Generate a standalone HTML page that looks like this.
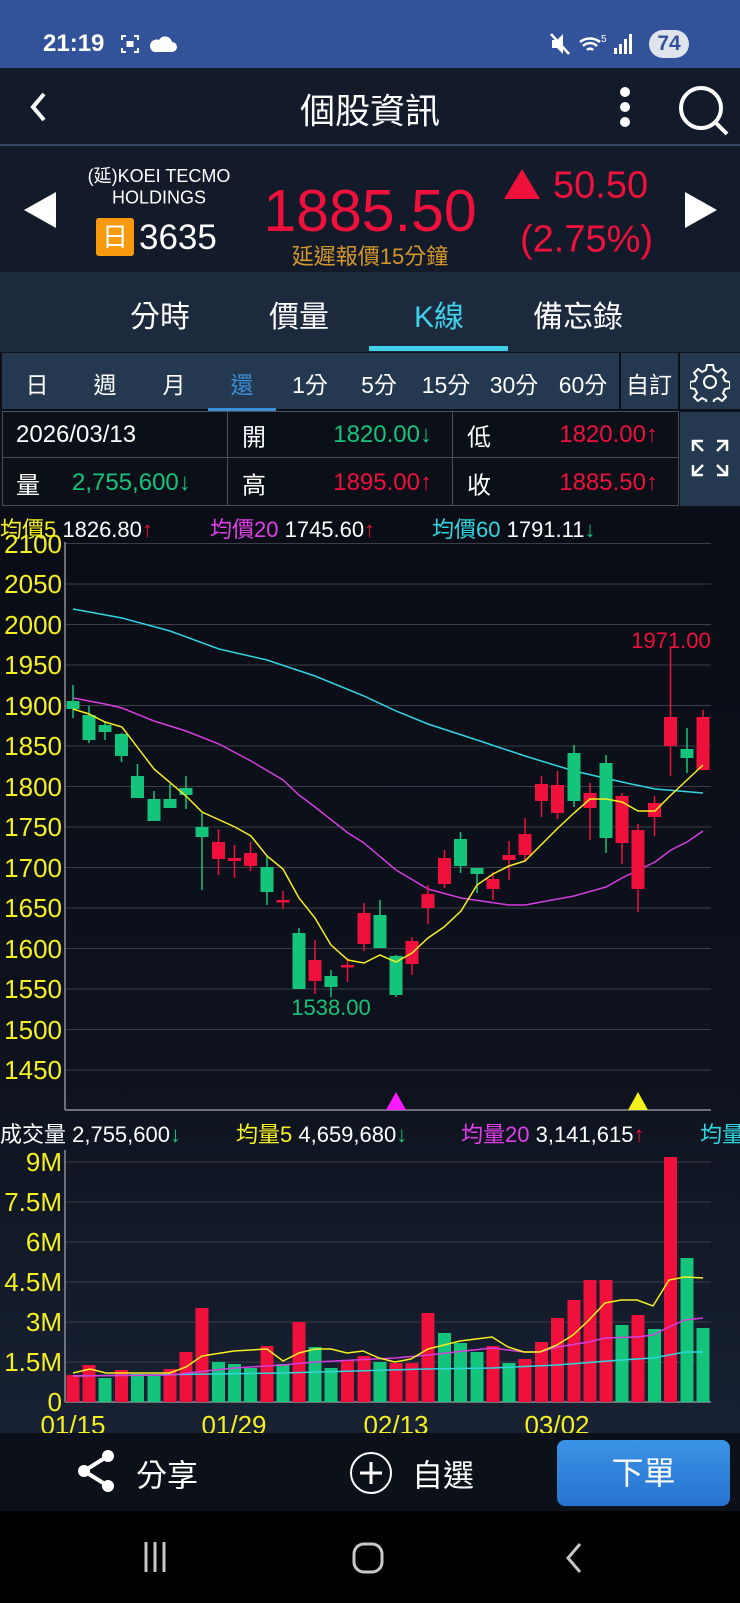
<!DOCTYPE html>
<html><head><meta charset="utf-8">
<style>
*{margin:0;padding:0;box-sizing:border-box}
body{width:740px;height:1603px;overflow:hidden;background:#0a0d15;font-family:"Liberation Sans","Noto Sans CJK TC",sans-serif;color:#fff;position:relative}
.a{position:absolute;white-space:nowrap}
.c{transform:translate(-50%,-50%)}
.vm{transform:translateY(-50%)}
.r{color:#f0103c}.g{color:#14c47a}.y{color:#f5f020}.m{color:#e03ee8}.cy{color:#2fd6e0}
</style></head><body>
<div class="a" style="left:0;top:0;width:740px;height:68px;background:#32529a"></div>
<div class="a vm" style="left:43px;top:44px;font-size:24px;font-weight:bold">21:19</div>
<svg class="a" style="left:118px;top:32px" width="70" height="26" viewBox="0 0 70 26"><path d="M4 8V4h4M16 4h4v4M20 16v4h-4M8 20H4v-4" stroke="#fff" stroke-width="2" fill="none"/><rect x="8.5" y="9" width="7" height="6" fill="#fff"/><path d="M36 20h18a5 5 0 0 0 0-10 7 7 0 0 0-13-2 6 6 0 0 0-5 12z" fill="#fff"/></svg>
<svg class="a" style="left:548px;top:30px" width="100" height="28" viewBox="0 0 100 28"><path d="M4 10h5l6-6v20l-6-6H4z" fill="#fff"/><path d="M3 4l18 20" stroke="#fff" stroke-width="2.5"/><path d="M32 12a16 16 0 0 1 20 0M35 16a10 10 0 0 1 14 0M39 20a4 4 0 0 1 6 0" stroke="#fff" stroke-width="2.5" fill="none"/><text x="53" y="12" font-size="10" fill="#fff" font-family="Liberation Sans">5</text><rect x="66" y="18" width="3" height="6" fill="#fff"/><rect x="71" y="14" width="3" height="10" fill="#fff"/><rect x="76" y="9" width="3" height="15" fill="#fff"/><rect x="81" y="4" width="3" height="20" fill="#fff"/></svg>
<div class="a" style="left:649px;top:30px;width:40px;height:28px;border-radius:14px;background:#dfe3ec;color:#33529a;font-size:21px;font-weight:bold;text-align:center;line-height:28px">74</div>
<div class="a" style="left:0;top:68px;width:740px;height:77px;background:#131b2b"></div>
<div class="a" style="left:0;top:144px;width:740px;height:2px;background:#34476b"></div>
<svg class="a" style="left:26px;top:90px" width="26" height="34"><path d="M18 4L7 17l11 13" stroke="#fff" stroke-width="4" fill="none"/></svg>
<div class="a c" style="left:370px;top:109px;font-size:35px">個股資訊</div>
<svg class="a" style="left:612px;top:86px" width="26" height="44"><circle cx="13" cy="6" r="5" fill="#fff"/><circle cx="13" cy="21" r="5" fill="#fff"/><circle cx="13" cy="36" r="5" fill="#fff"/></svg>
<svg class="a" style="left:675px;top:82px" width="56" height="56"><circle cx="26" cy="26" r="20" stroke="#fff" stroke-width="4" fill="none"/><path d="M40 40l12 12" stroke="#fff" stroke-width="4"/></svg>
<div class="a" style="left:0;top:146px;width:740px;height:126px;background:#131b2a"></div>
<svg class="a" style="left:22px;top:190px" width="36" height="40"><path d="M34 2v36L2 20z" fill="#fff"/></svg>
<svg class="a" style="left:683px;top:190px" width="36" height="40"><path d="M2 2v36l32-18z" fill="#fff"/></svg>
<div class="a c" style="left:159px;top:175px;font-size:18px">(延)KOEI TECMO</div>
<div class="a c" style="left:159px;top:198px;font-size:18px">HOLDINGS</div>
<div class="a" style="left:96px;top:218px;width:38px;height:38px;background:#f79a0e;border-radius:3px;font-size:26px;text-align:center;line-height:38px">日</div>
<div class="a vm" style="left:139px;top:238px;font-size:35px">3635</div>
<div class="a c r" style="left:370px;top:211px;font-size:59px">1885.50</div>
<div class="a c" style="left:370px;top:255px;font-size:22px;color:#d3962a">延遲報價15分鐘</div>
<svg class="a" style="left:503px;top:168px" width="38" height="32"><path d="M19 1L37 31H1z" fill="#f0103c"/></svg>
<div class="a vm r" style="left:553px;top:186px;font-size:38px">50.50</div>
<div class="a vm r" style="left:520px;top:240px;font-size:38px">(2.75%)</div>
<div class="a" style="left:0;top:272px;width:740px;height:80px;background:#1d2a3e"></div>
<div class="a c" style="left:160px;top:314px;font-size:30px">分時</div>
<div class="a c" style="left:299px;top:314px;font-size:30px">價量</div>
<div class="a c" style="left:439px;top:314px;font-size:30px;color:#3fd0ea">K線</div>
<div class="a c" style="left:578px;top:314px;font-size:30px">備忘錄</div>
<div class="a" style="left:369px;top:346px;width:139px;height:5px;background:#3fd0ea"></div>
<div class="a" style="left:0;top:352px;width:740px;height:158px;background:#0b0f18"></div>
<div class="a" style="left:2px;top:353px;width:617px;height:56px;background:#243850"></div>
<div class="a" style="left:621px;top:353px;width:57px;height:56px;background:#243850"></div>
<div class="a" style="left:680px;top:353px;width:60px;height:56px;background:#243850"></div>
<div class="a" style="left:680px;top:412px;width:60px;height:94px;background:#243850"></div>
<div class="a c" style="left:37px;top:383px;font-size:23px">日</div>
<div class="a c" style="left:105px;top:383px;font-size:23px">週</div>
<div class="a c" style="left:174px;top:383px;font-size:23px">月</div>
<div class="a c" style="left:242px;top:383px;font-size:23px;color:#3a8fd8">還</div>
<div class="a c" style="left:310px;top:383px;font-size:23px">1分</div>
<div class="a c" style="left:379px;top:383px;font-size:23px">5分</div>
<div class="a c" style="left:446px;top:383px;font-size:23px">15分</div>
<div class="a c" style="left:514px;top:383px;font-size:23px">30分</div>
<div class="a c" style="left:583px;top:383px;font-size:23px">60分</div>
<div class="a c" style="left:649px;top:383px;font-size:23px">自訂</div>
<div class="a" style="left:208px;top:408px;width:68px;height:3px;background:#3a8fd8"></div>
<svg class="a" style="left:690px;top:362px" width="40" height="40" viewBox="0 0 40 40"><path d="M17 3h6l1 5 4 2 4-3 4 4-3 4 2 4 5 1v6l-5 1-2 4 3 4-4 4-4-3-4 2-1 5h-6l-1-5-4-2-4 3-4-4 3-4-2-4-5-1v-6l5-1 2-4-3-4 4-4 4 3 4-2z" stroke="#fff" stroke-width="2" fill="none"/><circle cx="20" cy="20" r="6" stroke="#fff" stroke-width="2" fill="none"/></svg>
<svg class="a" style="left:690px;top:438px" width="40" height="40" viewBox="0 0 40 40" stroke="#fff" stroke-width="2.5" fill="none"><path d="M3 13V3h10M3 3l10 10M27 3h10v10M37 3L27 13M3 27v10h10M3 37l10-10M37 27v10H27M37 37L27 27"/></svg>
<div class="a" style="left:2px;top:411px;width:677px;height:95px;border:1px solid #4a4f58"></div>
<div class="a" style="left:2px;top:457px;width:677px;height:1px;background:#4a4f58"></div>
<div class="a" style="left:227px;top:411px;width:1px;height:95px;background:#4a4f58"></div>
<div class="a" style="left:452px;top:411px;width:1px;height:95px;background:#4a4f58"></div>
<div class="a vm" style="left:16px;top:435px;font-size:24px">2026/03/13</div>
<div class="a vm" style="left:242px;top:435px;font-size:24px">開</div>
<div class="a vm g" style="right:308px;top:435px;font-size:24px">1820.00↓</div>
<div class="a vm" style="left:467px;top:435px;font-size:24px">低</div>
<div class="a vm r" style="right:82px;top:435px;font-size:24px">1820.00↑</div>
<div class="a vm" style="left:16px;top:483px;font-size:24px">量</div>
<div class="a vm g" style="left:72px;top:483px;font-size:24px">2,755,600↓</div>
<div class="a vm" style="left:242px;top:483px;font-size:24px">高</div>
<div class="a vm r" style="right:308px;top:483px;font-size:24px">1895.00↑</div>
<div class="a vm" style="left:467px;top:483px;font-size:24px">收</div>
<div class="a vm r" style="right:82px;top:483px;font-size:24px">1885.50↑</div>
<div class="a vm" style="left:0;top:528px;font-size:22px"><span class="y">均價5</span> 1826.80<span class="r">↑</span></div>
<div class="a vm" style="left:210px;top:528px;font-size:22px"><span class="m">均價20</span> 1745.60<span class="r">↑</span></div>
<div class="a vm" style="left:432px;top:528px;font-size:22px"><span class="cy">均價60</span> 1791.11<span class="g">↓</span></div>
<svg class="a" style="left:0;top:0" width="740" height="1603" viewBox="0 0 740 1603">
<defs><linearGradient id="bg" x1="0" y1="0" x2="0" y2="1"><stop offset="0" stop-color="#0a0d15"/><stop offset="0.6" stop-color="#0d121d"/><stop offset="1" stop-color="#182234"/></linearGradient></defs>
<rect x="0" y="542" width="740" height="891" fill="url(#bg)"/>
<g stroke="#3a3e48" stroke-width="1">
<line x1="65" y1="543.5" x2="711" y2="543.5"/><line x1="65" y1="584" x2="711" y2="584"/><line x1="65" y1="624.5" x2="711" y2="624.5"/><line x1="65" y1="665" x2="711" y2="665"/><line x1="65" y1="705.5" x2="711" y2="705.5"/><line x1="65" y1="746" x2="711" y2="746"/><line x1="65" y1="786.5" x2="711" y2="786.5"/><line x1="65" y1="827" x2="711" y2="827"/><line x1="65" y1="867.5" x2="711" y2="867.5"/><line x1="65" y1="908" x2="711" y2="908"/><line x1="65" y1="948.5" x2="711" y2="948.5"/><line x1="65" y1="989" x2="711" y2="989"/><line x1="65" y1="1029.5" x2="711" y2="1029.5"/><line x1="65" y1="1070" x2="711" y2="1070"/>
<line x1="65" y1="1162" x2="711" y2="1162"/><line x1="65" y1="1202" x2="711" y2="1202"/><line x1="65" y1="1242" x2="711" y2="1242"/><line x1="65" y1="1282" x2="711" y2="1282"/><line x1="65" y1="1322" x2="711" y2="1322"/><line x1="65" y1="1362" x2="711" y2="1362"/>
</g>
<g stroke="#8a8f98" stroke-width="1.5"><line x1="65" y1="542" x2="65" y2="1110"/><line x1="65" y1="1110" x2="711" y2="1110"/><line x1="65" y1="1150" x2="65" y2="1402"/><line x1="65" y1="1402" x2="711" y2="1402"/></g>
<g fill="#f5f020" font-size="26" text-anchor="end" font-family="Liberation Sans">
<text x="62" y="553">2100</text><text x="62" y="593">2050</text><text x="62" y="634">2000</text><text x="62" y="674">1950</text><text x="62" y="715">1900</text><text x="62" y="755">1850</text><text x="62" y="796">1800</text><text x="62" y="836">1750</text><text x="62" y="877">1700</text><text x="62" y="917">1650</text><text x="62" y="958">1600</text><text x="62" y="998">1550</text><text x="62" y="1039">1500</text><text x="62" y="1079">1450</text>
<text x="62" y="1171">9M</text><text x="62" y="1211">7.5M</text><text x="62" y="1251">6M</text><text x="62" y="1291">4.5M</text><text x="62" y="1331">3M</text><text x="62" y="1371">1.5M</text><text x="62" y="1411">0</text>
</g>
<g fill="#f5f020" font-size="26" text-anchor="middle" font-family="Liberation Sans"><text x="73" y="1434">01/15</text><text x="234" y="1434">01/29</text><text x="396" y="1434">02/13</text><text x="557" y="1434">03/02</text></g>
<polyline fill="none" stroke="#2fd6e0" stroke-width="1.5" points="73,609 122,618 170,631 219,649 267,660 315,676 364,696 396,711 428,724 477,740 525,756 574,771 622,782 655,789 703,793"/>
<polyline fill="none" stroke="#d63ee0" stroke-width="1.5" points="73,698 105,704 122,708 154,721 186,731 219,744 251,761 283,780 299,795 315,807 348,833 364,843 396,870 428,889 461,898 509,905 525,905 574,896 606,887 622,878 655,862 671,850 687,842 703,831"/>
<g fill="#14c47a" stroke="#14c47a" stroke-width="1.5">
<line x1="73" y1="685" x2="73" y2="718"/><rect x="66.5" y="701" width="13" height="8" stroke="none"/>
<line x1="89" y1="706" x2="89" y2="743"/><rect x="82.5" y="715" width="13" height="25" stroke="none"/>
<line x1="105" y1="721" x2="105" y2="740"/><rect x="98.5" y="725" width="13" height="7" stroke="none"/>
<line x1="121.5" y1="733" x2="121.5" y2="762"/><rect x="115" y="734" width="13" height="22" stroke="none"/>
<line x1="137.5" y1="764" x2="137.5" y2="798"/><rect x="131" y="776" width="13" height="22" stroke="none"/>
<line x1="154" y1="791" x2="154" y2="821"/><rect x="147.5" y="799" width="13" height="22" stroke="none"/>
<line x1="170" y1="784" x2="170" y2="808"/><rect x="163.5" y="799" width="13" height="9" stroke="none"/>
<line x1="186" y1="776" x2="186" y2="809"/><rect x="179.5" y="788" width="13" height="7" stroke="none"/>
<line x1="202" y1="813" x2="202" y2="890"/><rect x="195.5" y="827" width="13" height="10" stroke="none"/>
<line x1="267" y1="856" x2="267" y2="905"/><rect x="260.5" y="867" width="13" height="25" stroke="none"/>
<line x1="299" y1="928" x2="299" y2="989"/><rect x="292.5" y="933" width="13" height="56" stroke="none"/>
<line x1="331" y1="970" x2="331" y2="997"/><rect x="324.5" y="976" width="13" height="11" stroke="none"/>
<line x1="380" y1="900" x2="380" y2="948"/><rect x="373.5" y="915" width="13" height="33" stroke="none"/>
<line x1="396" y1="955" x2="396" y2="997"/><rect x="389.5" y="956" width="13" height="39" stroke="none"/>
<line x1="460.5" y1="832" x2="460.5" y2="873"/><rect x="454" y="839" width="13" height="27" stroke="none"/>
<line x1="477" y1="868" x2="477" y2="893"/><rect x="470.5" y="868" width="13" height="6" stroke="none"/>
<line x1="574" y1="745" x2="574" y2="807"/><rect x="567.5" y="753" width="13" height="48" stroke="none"/>
<line x1="606" y1="755" x2="606" y2="853"/><rect x="599.5" y="763" width="13" height="75" stroke="none"/>
<line x1="687" y1="728" x2="687" y2="773"/><rect x="680.5" y="749" width="13" height="9" stroke="none"/>
</g>
<g fill="#f0103c" stroke="#f0103c" stroke-width="1.5">
<line x1="218.5" y1="829" x2="218.5" y2="875"/><rect x="212" y="842" width="13" height="17" stroke="none"/>
<line x1="234.5" y1="845" x2="234.5" y2="878"/><rect x="228" y="858" width="13" height="3" stroke="none"/>
<line x1="250.5" y1="842" x2="250.5" y2="871"/><rect x="244" y="853" width="13" height="13" stroke="none"/>
<line x1="283" y1="891" x2="283" y2="909"/><rect x="276.5" y="900" width="13" height="2.5" stroke="none"/>
<line x1="315" y1="940" x2="315" y2="994"/><rect x="308.5" y="960" width="13" height="21" stroke="none"/>
<line x1="347.5" y1="958" x2="347.5" y2="982"/><rect x="341" y="965" width="13" height="2.5" stroke="none"/>
<line x1="364" y1="903" x2="364" y2="951"/><rect x="357.5" y="913" width="13" height="31" stroke="none"/>
<line x1="412" y1="937" x2="412" y2="975"/><rect x="405.5" y="941" width="13" height="23" stroke="none"/>
<line x1="428" y1="885" x2="428" y2="924"/><rect x="421.5" y="894" width="13" height="14" stroke="none"/>
<line x1="444.5" y1="850" x2="444.5" y2="888"/><rect x="438" y="858" width="13" height="26" stroke="none"/>
<line x1="493" y1="872" x2="493" y2="900"/><rect x="486.5" y="879" width="13" height="10" stroke="none"/>
<line x1="509" y1="841" x2="509" y2="880"/><rect x="502.5" y="855" width="13" height="5" stroke="none"/>
<line x1="525" y1="818" x2="525" y2="862"/><rect x="518.5" y="834" width="13" height="21" stroke="none"/>
<line x1="541.5" y1="776" x2="541.5" y2="817"/><rect x="535" y="784" width="13" height="17" stroke="none"/>
<line x1="557.5" y1="771" x2="557.5" y2="819"/><rect x="551" y="785" width="13" height="28" stroke="none"/>
<line x1="590" y1="783" x2="590" y2="840"/><rect x="583.5" y="793" width="13" height="15" stroke="none"/>
<line x1="622" y1="793" x2="622" y2="864"/><rect x="615.5" y="796" width="13" height="47" stroke="none"/>
<line x1="638" y1="824" x2="638" y2="912"/><rect x="631.5" y="830" width="13" height="59" stroke="none"/>
<line x1="654.5" y1="796" x2="654.5" y2="836"/><rect x="648" y="803" width="13" height="14" stroke="none"/>
<line x1="670.5" y1="648" x2="670.5" y2="776"/><rect x="664" y="717" width="13" height="29" stroke="none"/>
<line x1="703" y1="710" x2="703" y2="770"/><rect x="696.5" y="717" width="13" height="53" stroke="none"/>
</g>
<polyline fill="none" stroke="#f5f020" stroke-width="1.5" points="73,709 89,714 105,722 122,727 154,769 186,796 202,812 235,827 251,836 267,856 283,869 299,898 315,918 331,945 348,960 364,963 380,955 396,962 412,953 428,938 444,927 461,911 477,885 493,874 509,866 525,861 541,845 558,828 574,813 590,799 606,799 622,802 638,811 655,811 671,795 687,780 703,765"/>
<text x="331" y="1015" fill="#14c47a" font-size="22" text-anchor="middle" font-family="Liberation Sans">1538.00</text>
<text x="671" y="648" fill="#f0103c" font-size="22" text-anchor="middle" font-family="Liberation Sans">1971.00</text>
<path d="M396 1092l10 18h-20z" fill="#ff1aff"/><path d="M638 1092l10 18h-20z" fill="#f5f020"/>
<g fill="#f0103c">
<rect x="66.5" y="1375" width="13" height="27"/><rect x="82.5" y="1365" width="13" height="37"/><rect x="115" y="1370" width="13" height="32"/><rect x="163.5" y="1369" width="13" height="33"/><rect x="179.5" y="1352" width="13" height="50"/><rect x="195.5" y="1308" width="13" height="94"/><rect x="260.5" y="1346" width="13" height="56"/><rect x="292.5" y="1322" width="13" height="80"/><rect x="341" y="1360" width="13" height="42"/><rect x="357.5" y="1356" width="13" height="46"/><rect x="389.5" y="1363" width="13" height="39"/><rect x="405.5" y="1363" width="13" height="39"/><rect x="421.5" y="1313" width="13" height="89"/><rect x="486.5" y="1346" width="13" height="56"/><rect x="518.5" y="1359" width="13" height="43"/><rect x="535" y="1342" width="13" height="60"/><rect x="551" y="1318" width="13" height="84"/><rect x="567.5" y="1300" width="13" height="102"/><rect x="583.5" y="1280" width="13" height="122"/><rect x="599.5" y="1280" width="13" height="122"/><rect x="631.5" y="1315" width="13" height="87"/><rect x="664" y="1157" width="13" height="245"/>
</g>
<g fill="#14c47a">
<rect x="98.5" y="1378" width="13" height="24"/><rect x="131" y="1374" width="13" height="28"/><rect x="147.5" y="1376" width="13" height="26"/><rect x="212" y="1362" width="13" height="40"/><rect x="228" y="1364" width="13" height="38"/><rect x="244" y="1368" width="13" height="34"/><rect x="276.5" y="1364" width="13" height="38"/><rect x="308.5" y="1347" width="13" height="55"/><rect x="324.5" y="1368" width="13" height="34"/><rect x="373.5" y="1362" width="13" height="40"/><rect x="438" y="1333" width="13" height="69"/><rect x="454" y="1343" width="13" height="59"/><rect x="470.5" y="1352" width="13" height="50"/><rect x="502.5" y="1363" width="13" height="39"/><rect x="615.5" y="1325" width="13" height="77"/><rect x="648" y="1329" width="13" height="73"/><rect x="680.5" y="1258" width="13" height="144"/><rect x="696.5" y="1328" width="13" height="74"/>
</g>
<polyline fill="none" stroke="#2fd6e0" stroke-width="1.5" points="73,1376 283,1373 425,1369 492,1368 557,1365 621,1360 653,1358 685,1352 703,1352"/>
<polyline fill="none" stroke="#d63ee0" stroke-width="1.5" points="73,1376 170,1375 234,1368 283,1365 315,1362 395,1358 428,1355 492,1348 524,1352 540,1352 557,1347 589,1342 605,1338 637,1337 653,1335 669,1327 685,1320 703,1318"/>
<polyline fill="none" stroke="#f5f020" stroke-width="1.5" points="73,1373 90,1369 106,1373 170,1373 186,1367 202,1356 234,1351 267,1349 283,1361 299,1353 315,1349 331,1349 347,1353 363,1351 379,1358 395,1362 411,1359 428,1349 444,1345 460,1341 492,1337 508,1347 524,1352 540,1352 557,1345 573,1335 589,1320 605,1303 621,1300 637,1300 653,1306 669,1280 685,1277 703,1278"/>
</svg>
<div class="a vm" style="left:0;top:1133px;font-size:22px">成交量 2,755,600<span class="g">↓</span></div>
<div class="a vm" style="left:236px;top:1133px;font-size:22px"><span class="y">均量5</span> 4,659,680<span class="g">↓</span></div>
<div class="a vm" style="left:461px;top:1133px;font-size:22px"><span class="m">均量20</span> 3,141,615<span class="r">↑</span></div>
<div class="a vm cy" style="left:700px;top:1133px;font-size:22px">均量</div>
<div class="a" style="left:0;top:1433px;width:740px;height:78px;background:#0c1018"></div>
<svg class="a" style="left:76px;top:1448px" width="42" height="46"><g fill="#fff"><circle cx="32" cy="8" r="6"/><circle cx="8" cy="23" r="6"/><circle cx="32" cy="38" r="6"/></g><path d="M32 8L8 23l24 15" stroke="#fff" stroke-width="4" fill="none"/></svg>
<div class="a vm" style="left:136px;top:1473px;font-size:31px">分享</div>
<svg class="a" style="left:349px;top:1451px" width="44" height="44"><circle cx="22" cy="22" r="20" stroke="#fff" stroke-width="2" fill="none"/><path d="M22 11v22M11 22h22" stroke="#fff" stroke-width="3"/></svg>
<div class="a vm" style="left:412px;top:1473px;font-size:31px">自選</div>
<div class="a" style="left:557px;top:1440px;width:173px;height:66px;border-radius:8px;background:linear-gradient(#3a93e6,#2673cf);font-size:32px;text-align:center;line-height:66px">下單</div>
<div class="a" style="left:0;top:1511px;width:740px;height:92px;background:#000"></div>
<svg class="a" style="left:140px;top:1538px" width="470" height="40" stroke="#c8c8c8" stroke-width="3" fill="none"><path d="M6 4v30M15 4v30M24 4v30"/><rect x="214" y="6" width="28" height="28" rx="10"/><path d="M440 6l-12 14 12 14"/></svg>
</body></html>
